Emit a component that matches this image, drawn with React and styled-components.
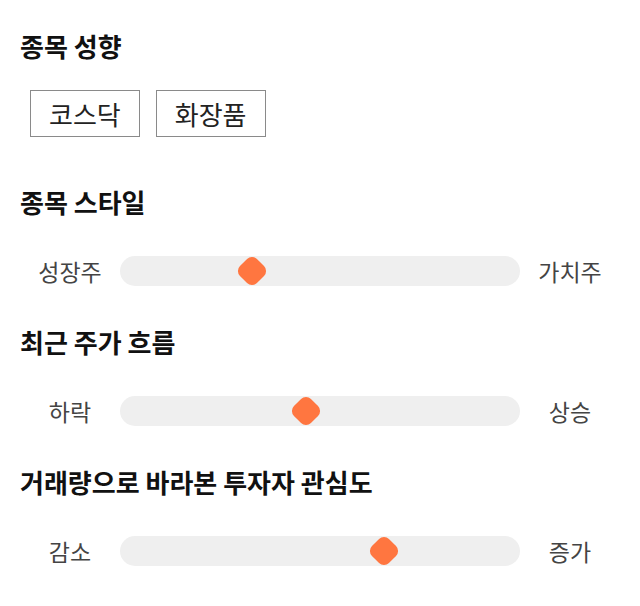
import React from "react";
import styled, { createGlobalStyle } from "styled-components";

const GlobalStyle = createGlobalStyle`
  body {
    margin: 0;
    background: #ffffff;
    font-family: "Noto Sans CJK KR", "Noto Sans", sans-serif;
  }
`;

const Page = styled.div`
  padding: 31px 0 0;
  width: 640px;
`;

const Section = styled.section`
  margin-bottom: ${(p) => p.gap || 41}px;
`;

const Heading = styled.h2`
  margin: 0 0 ${(p) => p.space || 39}px;
  padding: 0 20px;
  font-size: 26px;
  line-height: 30px;
  font-weight: 700;
  color: #111111;
`;

const ChipList = styled.div`
  display: flex;
  gap: 16px;
  padding: 0 30px;
`;

const Chip = styled.button`
  height: 47px;
  padding: 0 18px;
  border: 1px solid #8a8a8a;
  background: #ffffff;
  font-family: inherit;
  font-size: 26px;
  color: #222222;
  cursor: pointer;
`;

const SliderRow = styled.div`
  display: flex;
  align-items: center;
  padding: 0 20px;
  height: 30px;
`;

const SideLabel = styled.span`
  width: 100px;
  text-align: center;
  font-size: 23px;
  line-height: 30px;
  color: #444444;
`;

const Track = styled.div`
  position: relative;
  flex: 1;
  height: 30px;
  border-radius: 15px;
  background: #efefef;
`;

const Thumb = styled.div`
  position: absolute;
  top: 50%;
  width: 24px;
  height: 24px;
  margin: -12px 0 0 -12px;
  border-radius: 7px;
  background: #ff7640;
  transform: rotate(45deg);
`;

const styleSliders = [
  { title: "종목 스타일", left: "성장주", right: "가치주", value: 0.33 },
  { title: "최근 주가 흐름", left: "하락", right: "상승", value: 0.465 },
  { title: "거래량으로 바라본 투자자 관심도", left: "감소", right: "증가", value: 0.66 },
];

function Slider({ left, right, value }) {
  return (
    <SliderRow>
      <SideLabel>{left}</SideLabel>
      <Track>
        <Thumb style={{ left: `${value * 100}%` }} />
      </Track>
      <SideLabel>{right}</SideLabel>
    </SliderRow>
  );
}

export default function App() {
  return (
    <>
      <GlobalStyle />
      <Page>
        <Section gap={50}>
          <Heading space={29}>종목 성향</Heading>
          <ChipList>
            <Chip>코스닥</Chip>
            <Chip>화장품</Chip>
          </ChipList>
        </Section>
        {styleSliders.map((s) => (
          <Section key={s.title}>
            <Heading>{s.title}</Heading>
            <Slider left={s.left} right={s.right} value={s.value} />
          </Section>
        ))}
      </Page>
    </>
  );
}
